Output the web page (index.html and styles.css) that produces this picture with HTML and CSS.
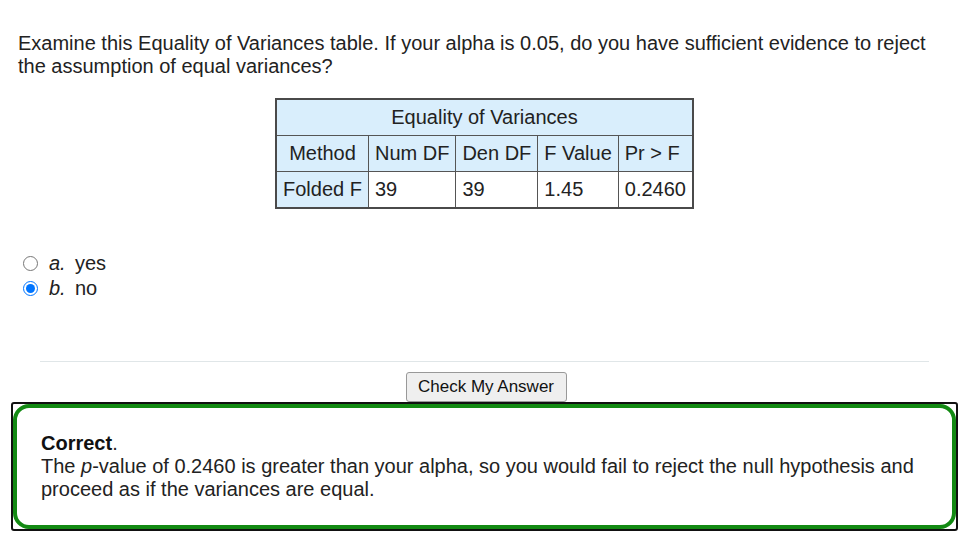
FILE: index.html
```html
<!DOCTYPE html>
<html>
<head>
<meta charset="utf-8">
<link rel="stylesheet" href="styles.css">
</head>
<body>
<div class="page">
  <p class="question">Examine this Equality of Variances table. If your alpha is 0.05, do you have sufficient evidence to reject the assumption of equal variances?</p>
  <table class="stats">
    <tr><th colspan="5" class="caption">Equality of Variances</th></tr>
    <tr><th class="c">Method</th><th>Num DF</th><th>Den DF</th><th>F Value</th><th>Pr &gt; F</th></tr>
    <tr><th>Folded F</th><td>39</td><td>39</td><td>1.45</td><td>0.2460</td></tr>
  </table>
  <div class="choices">
    <label class="choice"><input type="radio" name="ans"><span class="letter">a.</span>yes</label>
    <label class="choice"><input type="radio" name="ans" checked><span class="letter">b.</span>no</label>
  </div>
  <hr class="rule">
  <div class="actions"><button class="check">Check My Answer</button></div>
  <div class="feedback-outer">
    <div class="feedback">
      <b>Correct</b>.<br>
      The <i>p</i>-value of 0.2460 is greater than your alpha, so you would fail to reject the null hypothesis and proceed as if the variances are equal.
    </div>
  </div>
</div>
</body>
</html>
```

FILE: styles.css
```css
html, body {
  margin: 0;
  padding: 0;
  background: #ffffff;
}
body {
  font-family: "Liberation Sans", Arial, sans-serif;
  font-size: 20px;
  color: #222222;
}
.page {
  padding: 32px 11px 0 11px;
}
.question {
  margin: 0 7px;
  line-height: 23px;
}
.stats {
  margin: 20px auto 0;
  border-collapse: collapse;
  border: 2px solid #4a4a4a;
  font-size: 20px;
  line-height: 23px;
}
.stats th, .stats td {
  border: 1px solid #555555;
  padding: 6px 6px 6px 6px;
  font-weight: normal;
  text-align: left;
  color: #222;
}
.stats th {
  background: #d9eefc;
}
.stats th.caption, .stats th.c {
  text-align: center;
}
.stats td {
  background: #ffffff;
}
.choices {
  margin: 43px 0 0 6px;
  display: flex;
  flex-direction: column;
  gap: 3px;
}
.choice {
  display: flex;
  align-items: center;
  height: 22px;
  line-height: 22px;
}
.choice input {
  margin: 0 11px 0 6px;
  width: 15px;
  height: 15px;
}
.letter {
  font-style: italic;
  width: 26px;
}
.rule {
  margin: 62px 29px 0 29px;
  border: 0;
  border-top: 1px solid #e0e6e8;
  height: 0;
}
.actions {
  display: flex;
  justify-content: center;
  margin-top: 10px;
  padding-left: 3px;
}
.check {
  font-family: "Liberation Sans", Arial, sans-serif;
  font-size: 17px;
  color: #111;
  width: 161px;
  height: 30px;
  background: #efefef;
  border: 1px solid #999;
  border-radius: 3px;
  padding: 0;
}
.feedback-outer {
  border: 2px solid #111;
  border-radius: 3px;
  box-sizing: border-box;
  height: 129px;
}
.feedback {
  border: 4px solid #138a13;
  border-radius: 16px;
  height: 100%;
  box-sizing: border-box;
  padding: 24px 24px 0 24px;
  line-height: 23px;
  color: #222;
}
.feedback b {
  color: #111;
}
```
